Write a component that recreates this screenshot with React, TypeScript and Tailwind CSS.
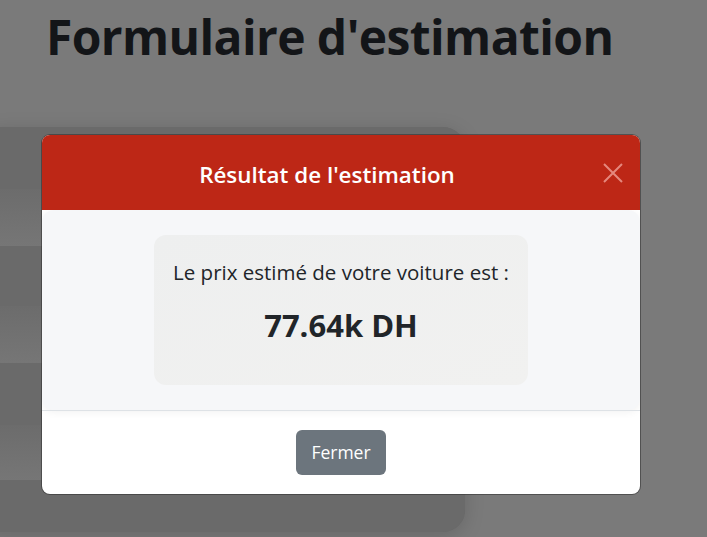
import React from "react";

export default function App() {
  const font = { fontFamily: '"Open Sans", "Noto Sans", sans-serif' };
  return (
    <div className="relative w-[707px] h-[537px] overflow-hidden bg-[#7a7a7a]" style={font}>
      {/* dimmed page behind */}
      <div className="pl-[46px] pt-[8px]">
        <h1 className="text-[48px] leading-[58px] font-bold text-[#131518] tracking-[-0.6px]">
          Formulaire d'estimation
        </h1>
      </div>
      <div className="mt-[61px] -ml-[20px] w-[485px] h-[405px] rounded-[22px] overflow-hidden bg-[#6a6a6a] shadow-[0_4px_20px_rgba(0,0,0,0.15)] flex flex-col">
        <div className="h-[62px] bg-[#6a6a6a]" />
        <div className="h-[57px] bg-gradient-to-b from-[#6c6c6c] to-[#767676]" />
        <div className="h-[60px] bg-[#6a6a6a]" />
        <div className="h-[57px] bg-gradient-to-b from-[#6c6c6c] to-[#767676]" />
        <div className="h-[62px] bg-[#6a6a6a]" />
        <div className="h-[55px] bg-gradient-to-b from-[#6c6c6c] to-[#767676]" />
        <div className="flex-1 bg-[#6a6a6a]" />
      </div>

      {/* modal */}
      <div className="absolute left-[42px] top-[135px] w-[598px] h-[359px] rounded-[8px] bg-white overflow-hidden shadow-[0_0_0_1px_rgba(40,40,40,0.5)] flex flex-col">
        <div className="relative h-[75px] bg-[#bd2716] flex items-center justify-center shrink-0 pr-[28px]">
          <span className="text-white text-[22.4px] font-semibold mt-[4px]">Résultat de l'estimation</span>
          <svg className="absolute left-[561px] top-[28px]" width="20" height="20" viewBox="0 0 20 20">
            <path d="M1 1 L19 19 M19 1 L1 19" stroke="rgba(255,200,195,0.6)" strokeWidth="2" />
          </svg>
        </div>
        <div className="h-[200px] shrink-0 bg-[#f6f7f9] rounded-[12px] shadow-[0_2px_8px_rgba(0,0,0,0.06)] flex items-center justify-center">
          <div className="w-[374px] h-[150px] rounded-[12px] bg-gradient-to-br from-[#eeefef] to-[#f1f1f0] flex flex-col items-center pt-[22px]">
            <p className="text-[20.5px] text-[#212529] leading-[30px]">Le prix estimé de votre voiture est :</p>
            <p className="mt-[19px] text-[31px] font-bold text-[#212529] leading-[38px]">77.64k DH</p>
          </div>
        </div>
        <div className="flex-1 border-t border-[#dee2e6] flex items-center justify-center">
          <button className="w-[90px] h-[45px] rounded-[6px] bg-[#6c757d] text-white text-[17.5px]">Fermer</button>
        </div>
      </div>
    </div>
  );
}
